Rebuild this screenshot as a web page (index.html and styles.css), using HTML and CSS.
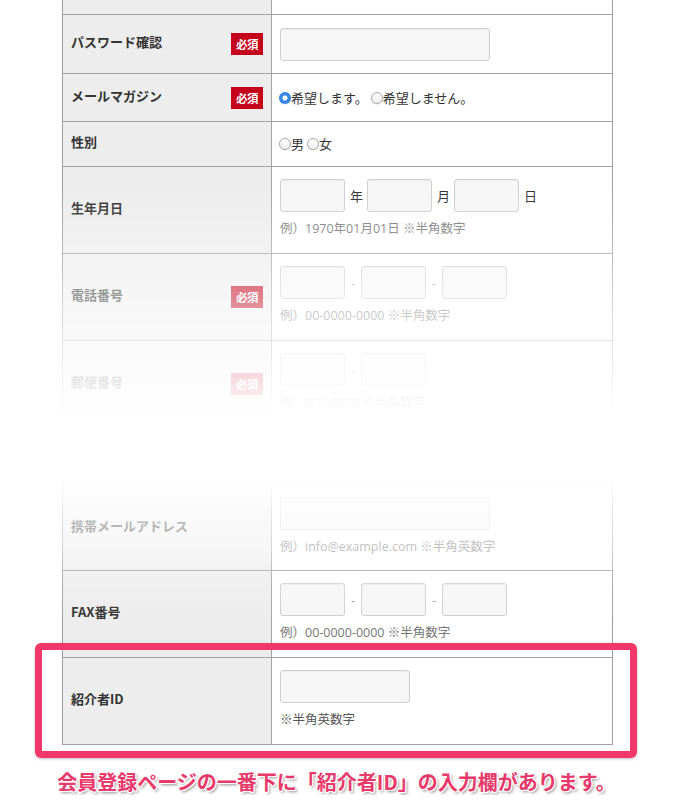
FILE: index.html
```html
<!DOCTYPE html>
<html lang="ja">
<head>
<meta charset="utf-8">
<title>会員登録</title>
<link rel="stylesheet" href="styles.css">
</head>
<body>
<div class="page">
  <div class="form">
    <div class="row r-top">
      <div class="label"></div>
      <div class="field"></div>
    </div>
    <div class="row r-pw">
      <div class="label"><span>パスワード確認</span><span class="req">必須</span></div>
      <div class="field center"><span class="input w-long"></span></div>
    </div>
    <div class="row r-mail">
      <div class="label"><span>メールマガジン</span><span class="req">必須</span></div>
      <div class="field center">
        <div class="radios">
          <span class="radio on"></span><span class="rtext">希望します。</span>
          <span class="radio"></span><span class="rtext">希望しません。</span>
        </div>
      </div>
    </div>
    <div class="row r-sex">
      <div class="label"><span>性別</span></div>
      <div class="field center">
        <div class="radios">
          <span class="radio"></span><span class="rtext">男</span>
          <span class="radio"></span><span class="rtext">女</span>
        </div>
      </div>
    </div>
    <div class="row r-birth">
      <div class="label"><span>生年月日</span></div>
      <div class="field">
        <div class="inputs">
          <span class="input w-short"></span><span class="unit">年</span>
          <span class="input w-short"></span><span class="unit">月</span>
          <span class="input w-short"></span><span class="unit">日</span>
        </div>
        <p class="note">例）1970年01月01日 ※半角数字</p>
      </div>
    </div>
    <div class="row r-tel">
      <div class="label"><span>電話番号</span><span class="req">必須</span></div>
      <div class="field">
        <div class="inputs">
          <span class="input w-short"></span><span class="dash">-</span>
          <span class="input w-short"></span><span class="dash">-</span>
          <span class="input w-short"></span>
        </div>
        <p class="note">例）00-0000-0000 ※半角数字</p>
      </div>
    </div>
    <div class="row r-zip">
      <div class="label"><span>郵便番号</span><span class="req">必須</span></div>
      <div class="field">
        <div class="inputs">
          <span class="input w-short"></span><span class="dash">-</span>
          <span class="input w-short"></span>
        </div>
        <p class="note">例）000-0000 ※半角数字</p>
      </div>
    </div>
    <div class="row r-addr">
      <div class="label"><span>都道府県</span><span class="req">必須</span></div>
      <div class="field center"><span class="input w-mid"></span></div>
    </div>
    <div class="row r-mobile">
      <div class="label"><span>携帯メールアドレス</span></div>
      <div class="field">
        <div class="inputs"><span class="input w-long"></span></div>
        <p class="note">例）info@example.com ※半角英数字</p>
      </div>
    </div>
    <div class="row r-fax">
      <div class="label"><span>FAX番号</span></div>
      <div class="field">
        <div class="inputs">
          <span class="input w-short"></span><span class="dash">-</span>
          <span class="input w-short"></span><span class="dash">-</span>
          <span class="input w-short"></span>
        </div>
        <p class="note">例）00-0000-0000 ※半角数字</p>
      </div>
    </div>
    <div class="row r-ref">
      <div class="label"><span>紹介者ID</span></div>
      <div class="field">
        <div class="inputs"><span class="input w-mid"></span></div>
        <p class="note dark">※半角英数字</p>
      </div>
    </div>
  </div>
  <p class="caption">会員登録ページの一番下に「紹介者ID」の入力欄があります。</p>
  <div class="fade"></div>
  <div class="highlight"></div>
</div>
</body>
</html>
```

FILE: styles.css
```css
html, body {
  margin: 0;
  padding: 0;
  background: #fff;
}
body {
  font-family: "Noto Sans CJK JP", "Noto Sans", sans-serif;
  color: #333;
}
.page {
  position: relative;
  width: 673px;
  height: 809px;
  overflow: hidden;
}
.form {
  margin-left: 62px;
  width: 551px;
  box-sizing: border-box;
  border-left: 1px solid #9e9e9e;
  border-right: 1px solid #9e9e9e;
}
.row {
  display: grid;
  grid-template-columns: 209px 1fr;
  box-sizing: border-box;
  border-bottom: 1px solid #a3a3a3;
}
.r-top { height: 15px; }
.r-pw { height: 59px; }
.r-mail { height: 48px; }
.r-sex { height: 45px; }
.r-birth { height: 87px; }
.r-tel { height: 87px; }
.r-zip { height: 87px; }
.r-addr { height: 57px; }
.r-mobile { height: 86px; }
.r-fax { height: 87px; }
.r-ref { height: 87px; }

.label {
  background: #ededed;
  border-right: 1px solid #a3a3a3;
  display: flex;
  align-items: center;
  justify-content: space-between;
  padding: 0 8px 0 8px;
  font-size: 13px;
  font-weight: 700;
  line-height: 18px;
  color: #333;
}
.label > span:first-child {
  position: relative;
  top: -2px;
}
.req {
  display: inline-flex;
  align-items: center;
  justify-content: center;
  width: 32px;
  height: 22px;
  background: #c4001a;
  color: #fff;
  font-size: 11.5px;
  font-weight: 700;
  letter-spacing: -0.5px;
}
.field {
  padding: 12px 8px 0 8px;
  font-size: 13px;
  line-height: 18px;
}
.field.center {
  padding-top: 0;
  display: flex;
  align-items: center;
}
.inputs {
  display: flex;
  align-items: center;
  height: 33px;
}
.input {
  display: block;
  box-sizing: border-box;
  height: 33px;
  border: 1px solid #cfcfcf;
  border-radius: 3px;
  background: #f6f6f6;
  box-shadow: inset 0 1px 1px rgba(0, 0, 0, 0.04);
}
.w-short { width: 65px; }
.w-mid { width: 130px; }
.w-long { width: 210px; }
.unit {
  margin: 0 4px 0 5px;
  font-size: 13px;
  color: #333;
}
.dash {
  width: 16px;
  text-align: center;
  color: #999;
  font-size: 12px;
}
.note {
  margin: 8px 0 0 0;
  font-family: "Open Sans", "Noto Sans CJK JP", sans-serif;
  font-size: 12.5px;
  line-height: 18px;
  color: #777;
}
.note.dark {
  color: #555;
}
.radios {
  display: flex;
  align-items: center;
  margin-left: -1px;
}
.radio {
  display: inline-block;
  box-sizing: border-box;
  width: 12px;
  height: 12px;
  border-radius: 50%;
  border: 1px solid #a8a8a8;
  background: linear-gradient(#fff, #f0f0f0);
  box-shadow: 0 0.5px 1px rgba(0, 0, 0, 0.15);
}
.radio.on {
  border: none;
  background: radial-gradient(circle, #fff 0, #fff 2.2px, #3f8fea 2.8px, #2f7fe0 6px);
}
.rtext {
  margin-right: 3px;
  font-size: 13px;
  color: #333;
}
.caption {
  margin: 25px 0 0 0;
  text-align: center;
  font-size: 20px;
  line-height: 24px;
  font-weight: 700;
  color: #e8396b;
  text-shadow:
    1px 0 0 #fff, -1px 0 0 #fff, 0 1px 0 #fff, 0 -1px 0 #fff,
    1px 1px 0 #fff, -1px -1px 0 #fff, 1px -1px 0 #fff, -1px 1px 0 #fff,
    2px 2px 3px rgba(0, 0, 0, 0.45);
}
.fade {
  position: absolute;
  left: 0;
  top: 0;
  width: 673px;
  height: 745px;
  pointer-events: none;
  background: linear-gradient(to bottom,
    rgba(255,255,255,0) 0px,
    rgba(255,255,255,0) 190px,
    rgba(255,255,255,0.3) 255px,
    rgba(255,255,255,0.5) 295px,
    rgba(255,255,255,0.62) 317px,
    rgba(255,255,255,0.87) 380px,
    rgba(255,255,255,1) 420px,
    rgba(255,255,255,1) 478px,
    rgba(255,255,255,0.65) 525px,
    rgba(255,255,255,0.55) 547px,
    rgba(255,255,255,0.2) 575px,
    rgba(255,255,255,0) 620px);
}
.highlight {
  position: absolute;
  left: 35px;
  top: 643px;
  width: 602px;
  height: 115px;
  box-sizing: border-box;
  border: 7px solid #f0386c;
  border-radius: 6px;
  box-shadow: 0 1px 3px rgba(0, 0, 0, 0.25);
}
```
